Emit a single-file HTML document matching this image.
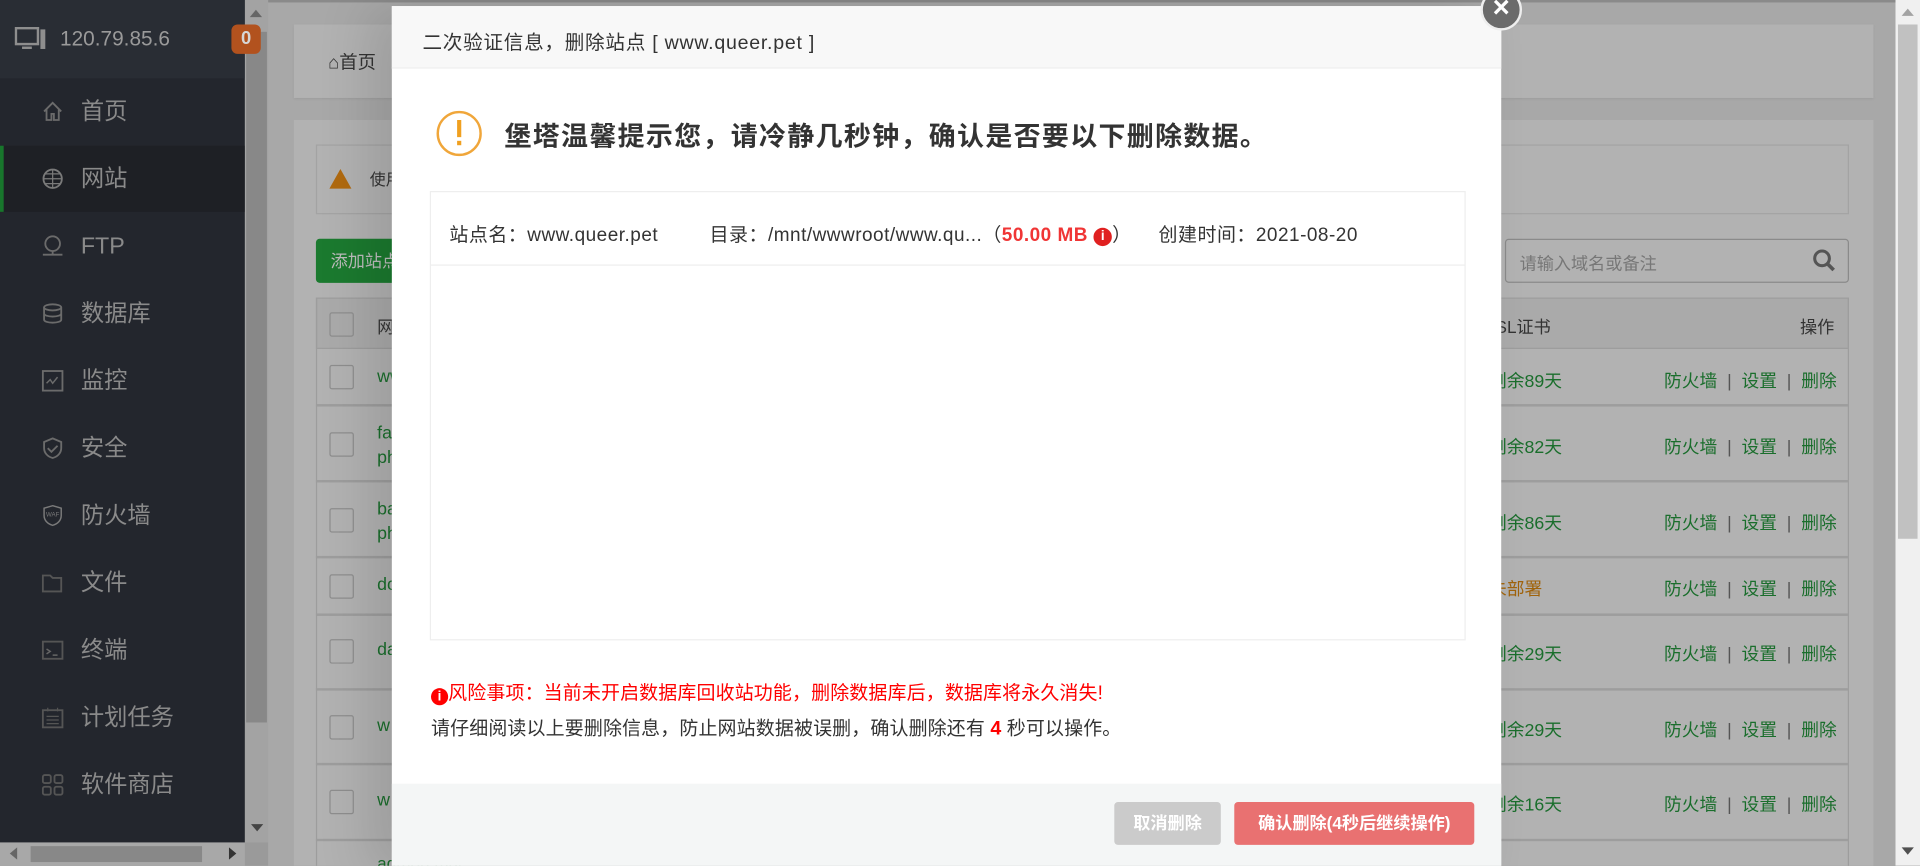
<!DOCTYPE html>
<html><head><meta charset="utf-8">
<style>
*{margin:0;padding:0;box-sizing:border-box}
html,body{width:1920px;height:866px;overflow:hidden;background:#a6a6a6}
body{font-family:"Liberation Sans","Noto Sans CJK SC",sans-serif}
#w{position:absolute;left:0;top:0;width:1568px;height:707px;transform:scale(1.22449);transform-origin:0 0;overflow:hidden;background:#a8a8a8}
.a{position:absolute}
.nav{position:absolute;left:0;width:200px;height:55px;color:#8a8a8a;font-size:19px;line-height:55px;padding-left:66px}
.nav svg{position:absolute;left:34px;top:18px}
.row{position:absolute;left:258px;width:1252px;border-bottom:2px solid #9d9d9d;font-size:14.5px;color:#1a6e2c}
.cb{position:absolute;left:11px;width:20px;height:20px;border:1px solid #8e8e8e;border-radius:2px}
.op{position:absolute;right:10px;color:#1a6e2c}
.op i{font-style:normal;color:#555;margin:0 8px}
.rem{position:absolute;left:958px}
</style></head><body>
<div id="w">
<!-- sidebar -->
<div class="a" style="left:0;top:0;width:200px;height:688px;background:#23262d"></div>
<div class="a" style="left:0;top:0;width:200px;height:64px;background:#292d34"></div>
<svg class="a" style="left:12px;top:22px" width="26" height="20" viewBox="0 0 26 20"><rect x="1" y="1" width="18" height="13" fill="none" stroke="#8e8e8e" stroke-width="2"/><rect x="6" y="16" width="8" height="2" fill="#8e8e8e"/><rect x="21" y="2" width="4" height="16" fill="#8e8e8e"/></svg>
<div class="a" style="left:49px;top:20px;font-size:17px;color:#9a9a9a;line-height:24px">120.79.85.6</div>
<div class="a" style="left:0;top:119px;width:200px;height:54px;background:#1e2025"></div>
<div class="a" style="left:0;top:119px;width:3px;height:54px;background:#18762c"></div>
<div class="nav" style="top:64px"><svg width="18" height="18" viewBox="0 0 18 18"><path d="M2 9L9 2l7 7M4 7v9h4v-5h2v5h4V7" fill="none" stroke="#6b6b6b" stroke-width="1.5"/></svg>首页</div>
<div class="nav" style="top:119px"><svg width="18" height="18" viewBox="0 0 18 18"><circle cx="9" cy="9" r="7.5" fill="none" stroke="#7a7a7a" stroke-width="1.5"/><path d="M1.5 9h15M9 1.5v15M3 5h12M3 13h12" stroke="#7a7a7a" stroke-width="1"/></svg>网站</div>
<div class="nav" style="top:174px"><svg width="18" height="18" viewBox="0 0 18 18"><circle cx="9" cy="7" r="6" fill="none" stroke="#6b6b6b" stroke-width="1.5"/><path d="M1 16h16M9 13v3" stroke="#6b6b6b" stroke-width="1.5"/></svg>FTP</div>
<div class="nav" style="top:229px"><svg width="18" height="18" viewBox="0 0 18 18"><ellipse cx="9" cy="4" rx="7" ry="2.5" fill="none" stroke="#6b6b6b" stroke-width="1.5"/><path d="M2 4v10c0 1.5 3 2.5 7 2.5s7-1 7-2.5V4M2 9c0 1.5 3 2.5 7 2.5s7-1 7-2.5" fill="none" stroke="#6b6b6b" stroke-width="1.5"/></svg>数据库</div>
<div class="nav" style="top:284px"><svg width="18" height="18" viewBox="0 0 18 18"><rect x="1" y="1" width="16" height="16" fill="none" stroke="#6b6b6b" stroke-width="1.5"/><path d="M4 11l3-3 2 3 4-5" fill="none" stroke="#6b6b6b" stroke-width="1.2"/></svg>监控</div>
<div class="nav" style="top:339px"><svg width="18" height="18" viewBox="0 0 18 18"><path d="M9 1l7 3v5c0 4-3 7-7 8-4-1-7-4-7-8V4z" fill="none" stroke="#6b6b6b" stroke-width="1.5"/><path d="M5 9l3 3 5-5" fill="none" stroke="#6b6b6b" stroke-width="1.5"/></svg>安全</div>
<div class="nav" style="top:394px"><svg width="18" height="18" viewBox="0 0 18 18"><path d="M9 1l7 2v6c0 4-3 7-7 8-4-1-7-4-7-8V3z" fill="none" stroke="#7a7a7a" stroke-width="1.2"/><text x="9" y="10" font-size="5" fill="#7a7a7a" text-anchor="middle" font-family="Liberation Sans">WAF</text></svg>防火墙</div>
<div class="nav" style="top:449px"><svg width="18" height="18" viewBox="0 0 18 18"><path d="M1 3h6l2 2h7v11H1z" fill="none" stroke="#555" stroke-width="1.5"/></svg>文件</div>
<div class="nav" style="top:504px"><svg width="18" height="18" viewBox="0 0 18 18"><rect x="1" y="2" width="16" height="14" fill="none" stroke="#555" stroke-width="1.5"/><path d="M4 8l3 2-3 2M9 13h4" fill="none" stroke="#666" stroke-width="1.2"/></svg>终端</div>
<div class="nav" style="top:559px"><svg width="18" height="18" viewBox="0 0 18 18"><rect x="1" y="3" width="16" height="14" fill="none" stroke="#555" stroke-width="1.5"/><path d="M4 8h10M4 11h10M4 14h10M5 1v3M13 1v3" stroke="#555" stroke-width="1"/></svg>计划任务</div>
<div class="nav" style="top:614px"><svg width="18" height="18" viewBox="0 0 18 18"><rect x="1" y="1" width="6.5" height="6.5" rx="1.5" fill="none" stroke="#555" stroke-width="1.5"/><rect x="10.5" y="1" width="6.5" height="6.5" rx="1.5" fill="none" stroke="#555" stroke-width="1.5"/><rect x="1" y="10.5" width="6.5" height="6.5" rx="1.5" fill="none" stroke="#555" stroke-width="1.5"/><rect x="10.5" y="10.5" width="6.5" height="6.5" rx="1.5" fill="none" stroke="#555" stroke-width="1.5"/></svg>软件商店</div>
<!-- sidebar scrollbars -->
<div class="a" style="left:200px;top:0;width:19px;height:688px;background:#a3a3a3"></div>
<div class="a" style="left:201px;top:26px;width:17px;height:564px;background:#888"></div>
<div class="a" style="left:204px;top:8px;width:0;height:0;border:5px solid transparent;border-bottom:6px solid #666;border-top:0"></div>
<div class="a" style="left:205px;top:673px;width:0;height:0;border:5px solid transparent;border-top:6px solid #444;border-bottom:0"></div>
<div class="a" style="left:0;top:688px;width:200px;height:19px;background:#a8a8a8"></div>
<div class="a" style="left:25px;top:691px;width:140px;height:13px;background:#888"></div>
<div class="a" style="left:8px;top:692px;border:5px solid transparent;border-right:6px solid #666;border-left:0"></div>
<div class="a" style="left:187px;top:692px;border:5px solid transparent;border-left:6px solid #333;border-right:0"></div>
<div class="a" style="left:200px;top:688px;width:19px;height:19px;background:#9a9a9a"></div>
<div class="a" style="left:189px;top:20px;width:24px;height:24px;border-radius:5px;background:#b2521e;color:#d6d6d6;font-size:15px;font-weight:bold;text-align:center;line-height:24px;z-index:5">0</div>
<!-- main content -->
<div class="a" style="left:240px;top:20px;width:1290px;height:60px;background:#b2b2b2;box-shadow:0 1px 2px #999"></div>
<div class="a" style="left:268px;top:40px;font-size:15px;color:#333">⌂首页</div>
<div class="a" style="left:240px;top:98px;width:1290px;height:620px;background:#b2b2b2"></div>
<div class="a" style="left:258px;top:118px;width:1252px;height:57px;border:1px solid #a3a3a3"></div>
<div class="a" style="left:269px;top:138px;width:0;height:0;border:9px solid transparent;border-bottom:16px solid #b06a10;border-top:0"></div>
<div class="a" style="left:302px;top:136px;font-size:13px;color:#333">使用</div>
<div class="a" style="left:258px;top:195px;width:80px;height:36px;background:#1b7a2f;border-radius:3px;color:#bcbcbc;font-size:14px;line-height:36px;padding-left:12px">添加站点</div>
<div class="a" style="left:1229px;top:195px;width:281px;height:36px;border:1px solid #8a8a8a;border-radius:3px"></div>
<div class="a" style="left:1241px;top:205px;font-size:14px;color:#777">请输入域名或备注</div>
<svg class="a" style="left:1480px;top:203px" width="20" height="20" viewBox="0 0 20 20"><circle cx="8" cy="8" r="6" fill="none" stroke="#555" stroke-width="2.5"/><path d="M12.5 12.5l5 5" stroke="#555" stroke-width="3"/></svg>
<div class="a" style="left:258px;top:243px;width:1252px;height:42px;background:#aaa;border:1px solid #9d9d9d"></div>
<div class="cb" style="left:269px;top:255px"></div>
<div class="a" style="left:308px;top:257px;font-size:14px;color:#333">网站名</div>
<div class="a" style="left:1212px;top:257px;font-size:14px;color:#333">SSL证书</div>
<div class="a" style="left:1470px;top:257px;font-size:14px;color:#333">操作</div>
<div class="a" style="left:258px;top:243px;width:1252px;height:470px;border-left:1px solid #9d9d9d;border-right:1px solid #9d9d9d"></div>

<div class="row" style="top:285px;height:47px"><div class="cb" style="top:13px"></div><span class="a" style="left:50px;top:15px">www.a</span><span class="rem" style="top:15px">剩余89天</span><span class="op" style="top:15px">防火墙<i>|</i>设置<i>|</i>删除</span></div>
<div class="row" style="top:332px;height:62px"><div class="cb" style="top:21px"></div><span class="a" style="left:50px;top:12px;line-height:20px">fa<br>ph</span><span class="rem" style="top:22px">剩余82天</span><span class="op" style="top:22px">防火墙<i>|</i>设置<i>|</i>删除</span></div>
<div class="row" style="top:394px;height:62px"><div class="cb" style="top:21px"></div><span class="a" style="left:50px;top:12px;line-height:20px">ba<br>ph</span><span class="rem" style="top:22px">剩余86天</span><span class="op" style="top:22px">防火墙<i>|</i>设置<i>|</i>删除</span></div>
<div class="row" style="top:456px;height:47px"><div class="cb" style="top:13px"></div><span class="a" style="left:50px;top:14px">do</span><span class="rem" style="top:14px;color:#a0630c">未部署</span><span class="op" style="top:14px">防火墙<i>|</i>设置<i>|</i>删除</span></div>
<div class="row" style="top:503px;height:61px"><div class="cb" style="top:19px"></div><span class="a" style="left:50px;top:20px">da</span><span class="rem" style="top:20px">剩余29天</span><span class="op" style="top:20px">防火墙<i>|</i>设置<i>|</i>删除</span></div>
<div class="row" style="top:564px;height:61px"><div class="cb" style="top:20px"></div><span class="a" style="left:50px;top:21px">w</span><span class="rem" style="top:21px">剩余29天</span><span class="op" style="top:21px">防火墙<i>|</i>设置<i>|</i>删除</span></div>
<div class="row" style="top:625px;height:62px"><div class="cb" style="top:20px"></div><span class="a" style="left:50px;top:21px">w</span><span class="rem" style="top:21px">剩余16天</span><span class="op" style="top:21px">防火墙<i>|</i>设置<i>|</i>删除</span></div>
<div class="a" style="left:308px;top:697px;font-size:14px;color:#1a6e2c">admon.mac</div>
<!-- right scrollbar -->
<div class="a" style="left:1548px;top:0;width:20px;height:707px;background:#f0f0f0"></div>
<div class="a" style="left:1550px;top:20px;width:16px;height:420px;background:#c1c1c1"></div>
<div class="a" style="left:1553px;top:7px;border:5px solid transparent;border-bottom:6px solid #a3a3a3;border-top:0"></div>
<div class="a" style="left:1553px;top:692px;border:5px solid transparent;border-top:6px solid #505050;border-bottom:0"></div>
<div class="a" style="left:219px;top:0;width:1329px;height:2px;background:#8a8a8a"></div>
<!-- modal -->
<div class="a" style="left:320px;top:5px;width:906px;height:710px;background:#fff;box-shadow:-20px 0 40px rgba(0,0,0,.12)">
  <div class="a" style="left:0;top:0;width:906px;height:51px;background:#f8f8f8;border-bottom:1px solid #eee"></div>
  <div class="a" style="left:25px;top:16px;font-size:16px;letter-spacing:0.6px;color:#333;white-space:nowrap">二次验证信息，删除站点 [ www.queer.pet ]</div>
  <svg class="a" style="left:35px;top:84px" width="40" height="40" viewBox="0 0 40 40"><circle cx="20" cy="20" r="17.5" fill="none" stroke="#f0a63a" stroke-width="2"/><rect x="18.3" y="9" width="3.4" height="14" fill="#f0a020"/><rect x="18.3" y="26" width="3.4" height="3.6" fill="#f0a020"/></svg>
  <div class="a" style="left:92px;top:89px;font-size:22px;letter-spacing:1.1px;font-weight:bold;color:#333;white-space:nowrap">堡塔温馨提示您，请冷静几秒钟，确认是否要以下删除数据。</div>
  <div class="a" style="left:31px;top:151px;width:846px;height:367px;border:1px solid #eee"></div>
  <div class="a" style="left:32px;top:211px;width:844px;height:1px;background:#eee"></div>
  <div class="a" style="left:47px;top:175px;font-size:15.5px;letter-spacing:0.4px;color:#333;white-space:nowrap">站点名：www.queer.pet<span style="margin-left:42px">目录：/mnt/wwwroot/www.qu...（<b style="color:#f03535">50.00 MB <span style="display:inline-block;width:15px;height:15px;border-radius:50%;background:#e02020;color:#fff;font-size:11px;text-align:center;line-height:15px;vertical-align:1px">i</span></b>）</span><span style="margin-left:22px">创建时间：2021-08-20</span></div>
  <div class="a" style="left:32px;top:549px;font-size:15.5px;letter-spacing:0.1px;color:#f00;white-space:nowrap"><span style="display:inline-block;width:14px;height:14px;border-radius:50%;background:#f00;color:#fff;font-size:11px;font-weight:bold;text-align:center;line-height:14px;vertical-align:-1px">i</span>风险事项：当前未开启数据库回收站功能，删除数据库后，数据库将永久消失!</div>
  <div class="a" style="left:32px;top:578px;font-size:15.5px;letter-spacing:0.1px;color:#333;white-space:nowrap">请仔细阅读以上要删除信息，防止网站数据被误删，确认删除还有 <b style="color:#f00;font-size:16px">4</b> 秒可以操作。</div>
  <div class="a" style="left:0;top:635px;width:906px;height:80px;background:#f4f6f6"></div>
  <div class="a" style="left:590px;top:650px;width:87px;height:35px;background:#cbcbcb;border-radius:3px;color:#fff;font-weight:bold;font-size:14px;text-align:center;line-height:35px">取消删除</div>
  <div class="a" style="left:688px;top:650px;width:196px;height:35px;background:#e97171;border-radius:3px;color:#fff;font-weight:bold;font-size:14px;text-align:center;line-height:35px">确认删除(4秒后继续操作)</div>
</div>
<div class="a" style="left:1209px;top:-9px;width:34px;height:34px;border-radius:50%;background:#6b6b6b;border:2px solid #eee;color:#fff;font-size:24px;font-weight:bold;text-align:center;line-height:28px">×</div>
</div>
</body></html>
